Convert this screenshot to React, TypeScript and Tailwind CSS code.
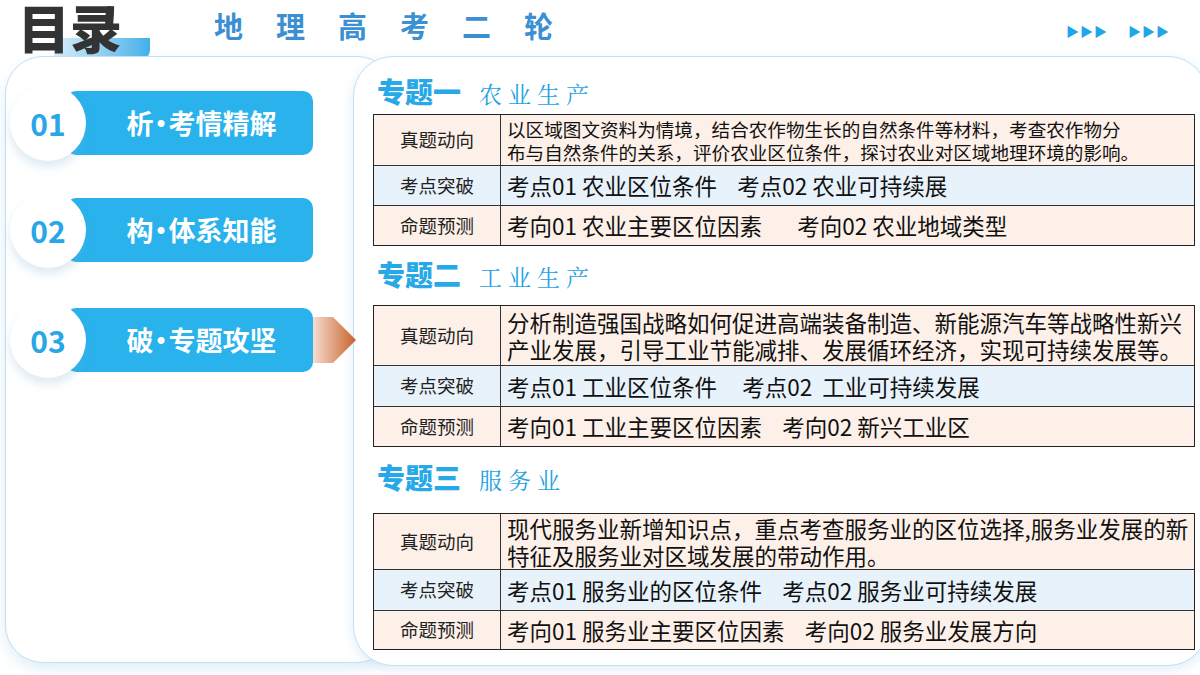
import React from "react";

const F = '"Noto Sans CJK SC", "Noto Sans", sans-serif';

function Pill({ n, a, b, mt, arrow }: { n: string; a: string; b: string; mt: string; arrow?: boolean }) {
  return (
    <div className={`relative flex items-center ${mt}`}>
      <div className="relative ml-[60px] flex h-[64px] w-[247px] items-center justify-center rounded-[10px] bg-[#29b2ec] pl-[24px] text-[27px] font-bold text-white">
        {a}<span className="-mx-[6px]">•</span>{b}
      </div>
      {arrow && (
        <svg width="44" height="46" viewBox="0 0 44 46">
          <defs>
            <linearGradient id="ag" x1="0" x2="1">
              <stop offset="0" stopColor="#f6ddd0" />
              <stop offset="1" stopColor="#c8622a" />
            </linearGradient>
          </defs>
          <polygon points="0,0 20,0 43,23 20,46 0,46" fill="url(#ag)" />
        </svg>
      )}
      <div className="absolute left-[4px] top-1/2 flex h-[76px] w-[76px] -translate-y-1/2 items-center justify-center rounded-full bg-white text-[30px] font-bold text-[#29a6e6] shadow-[0_6px_10px_rgba(120,170,210,0.25)]">
        {n}
      </div>
    </div>
  );
}

type Row = { label: string; text: React.ReactNode; bg: string; h: string; small?: boolean };

function Table({ rows }: { rows: Row[] }) {
  return (
    <div className="mr-[12px] border-[1.5px] border-[#222]">
      {rows.map((r, i) => (
        <div key={i} className={`flex ${r.bg} ${r.h} ${i > 0 ? "border-t-[1.5px] border-[#333]" : ""}`}>
          <div className="flex w-[127px] shrink-0 items-center justify-center border-r-[1.5px] border-[#333] text-[18.5px] text-[#222]">
            {r.label}
          </div>
          <div className={`flex flex-1 items-center overflow-hidden whitespace-nowrap px-[6px] text-[#111] ${r.small ? "text-[18.6px] leading-[23px]" : "text-[22.5px] leading-[27px]"}`}>
            <div>{r.text}</div>
          </div>
        </div>
      ))}
    </div>
  );
}

function Heading({ a, b }: { a: string; b: string }) {
  return (
    <div className="flex items-end gap-[18px]">
      <span className="text-[28px] font-black leading-none text-[#27a8e8]">{a}</span>
      <span className="text-[23px] leading-none tracking-[6px] text-[#23a2e3]" style={{ fontFamily: '"Noto Serif CJK SC", "Noto Sans CJK SC", serif' }}>{b}</span>
    </div>
  );
}

const pink = "bg-[#fdf0e8]";
const blue = "bg-[#e8f2fb]";

export default function App() {
  return (
    <div className="relative h-[675px] w-[1200px] overflow-hidden bg-white" style={{ fontFamily: F }}>
      <div className="flex h-[56px] items-start">
        <div className="relative ml-[18px] mt-[0px] h-[56px]">
          <div className="absolute left-[36px] top-[38px] h-[22px] w-[96px] rounded-br-[10px] bg-gradient-to-r from-[#d8eefa] to-[#3fb0ea]" />
          <div className="relative text-[52px] font-black leading-[66px] -mt-[6px] text-[#333]">目录</div>
        </div>
        <div className="ml-[92px] mt-[4px] text-[29px] font-bold tracking-[33px] text-[#3b8fd3]">地理高考二轮</div>
        <div className="ml-auto mr-[30px] mt-[24px] flex gap-[20px] text-[13px] leading-none text-[#1ea6e8]">
          <span className="tracking-[1px]">▶▶▶</span>
          <span className="tracking-[1px]">▶▶▶</span>
        </div>
      </div>

      <div className="relative flex">
        <div className="ml-[5px] h-[607px] w-[390px] shrink-0 rounded-[38px] border border-[#bfe0f5] bg-white pt-[34px] shadow-[0_6px_14px_rgba(150,200,235,0.3)]">
          <Pill n="01" a="析" b="考情精解" mt="" />
          <Pill n="02" a="构" b="体系知能" mt="mt-[43px]" />
          <Pill n="03" a="破" b="专题攻坚" mt="mt-[46px]" arrow />
        </div>

        <div className="-ml-[42px] flex h-[610px] flex-1 flex-col rounded-[40px] border border-[#bfe0f5] bg-white pl-[19px] pt-[20px] shadow-[0_4px_12px_rgba(150,200,235,0.3)]">
          <div className="pl-[4px]"><Heading a="专题一" b="农业生产" /></div>
          <div className="mt-[9px]">
            <Table
              rows={[
                { label: "真题动向", bg: pink, h: "h-[50px]", small: true, text: <>以区域图文资料为情境，结合农作物生长的自然条件等材料，考查农作物分<br />布与自然条件的关系，评价农业区位条件，探讨农业对区域地理环境的影响。</> },
                { label: "考点突破", bg: blue, h: "h-[40px]", text: <>考点01 农业区位条件&nbsp;&nbsp;&nbsp;&nbsp;考点02 农业可持续展</> },
                { label: "命题预测", bg: pink, h: "h-[40px]", text: <>考向01 农业主要区位因素&nbsp;&nbsp;&nbsp;&nbsp;&nbsp;&nbsp;&nbsp;考向02 农业地域类型</> },
              ]}
            />
          </div>
          <div className="mt-[14px] pl-[4px]"><Heading a="专题二" b="工业生产" /></div>
          <div className="mt-[17px]">
            <Table
              rows={[
                { label: "真题动向", bg: pink, h: "h-[59px]", text: <>分析制造强国战略如何促进高端装备制造、新能源汽车等战略性新兴<br />产业发展，引导工业节能减排、发展循环经济，实现可持续发展等。</> },
                { label: "考点突破", bg: blue, h: "h-[41px]", text: <>考点01 工业区位条件&nbsp;&nbsp;&nbsp;&nbsp;&nbsp;考点02&nbsp;&nbsp;工业可持续发展</> },
                { label: "命题预测", bg: pink, h: "h-[40px]", text: <>考向01 工业主要区位因素&nbsp;&nbsp;&nbsp;&nbsp;考向02 新兴工业区</> },
              ]}
            />
          </div>
          <div className="mt-[16px] pl-[4px]"><Heading a="专题三" b="服务业" /></div>
          <div className="mt-[22px]">
            <Table
              rows={[
                { label: "真题动向", bg: pink, h: "h-[55px]", text: <>现代服务业新增知识点，重点考查服务业的区位选择,服务业发展的新<br />特征及服务业对区域发展的带动作用。</> },
                { label: "考点突破", bg: blue, h: "h-[41px]", text: <>考点01 服务业的区位条件&nbsp;&nbsp;&nbsp;&nbsp;考点02 服务业可持续发展</> },
                { label: "命题预测", bg: pink, h: "h-[39px]", text: <>考向01 服务业主要区位因素&nbsp;&nbsp;&nbsp;&nbsp;考向02 服务业发展方向</> },
              ]}
            />
          </div>
        </div>
      </div>
    </div>
  );
}
